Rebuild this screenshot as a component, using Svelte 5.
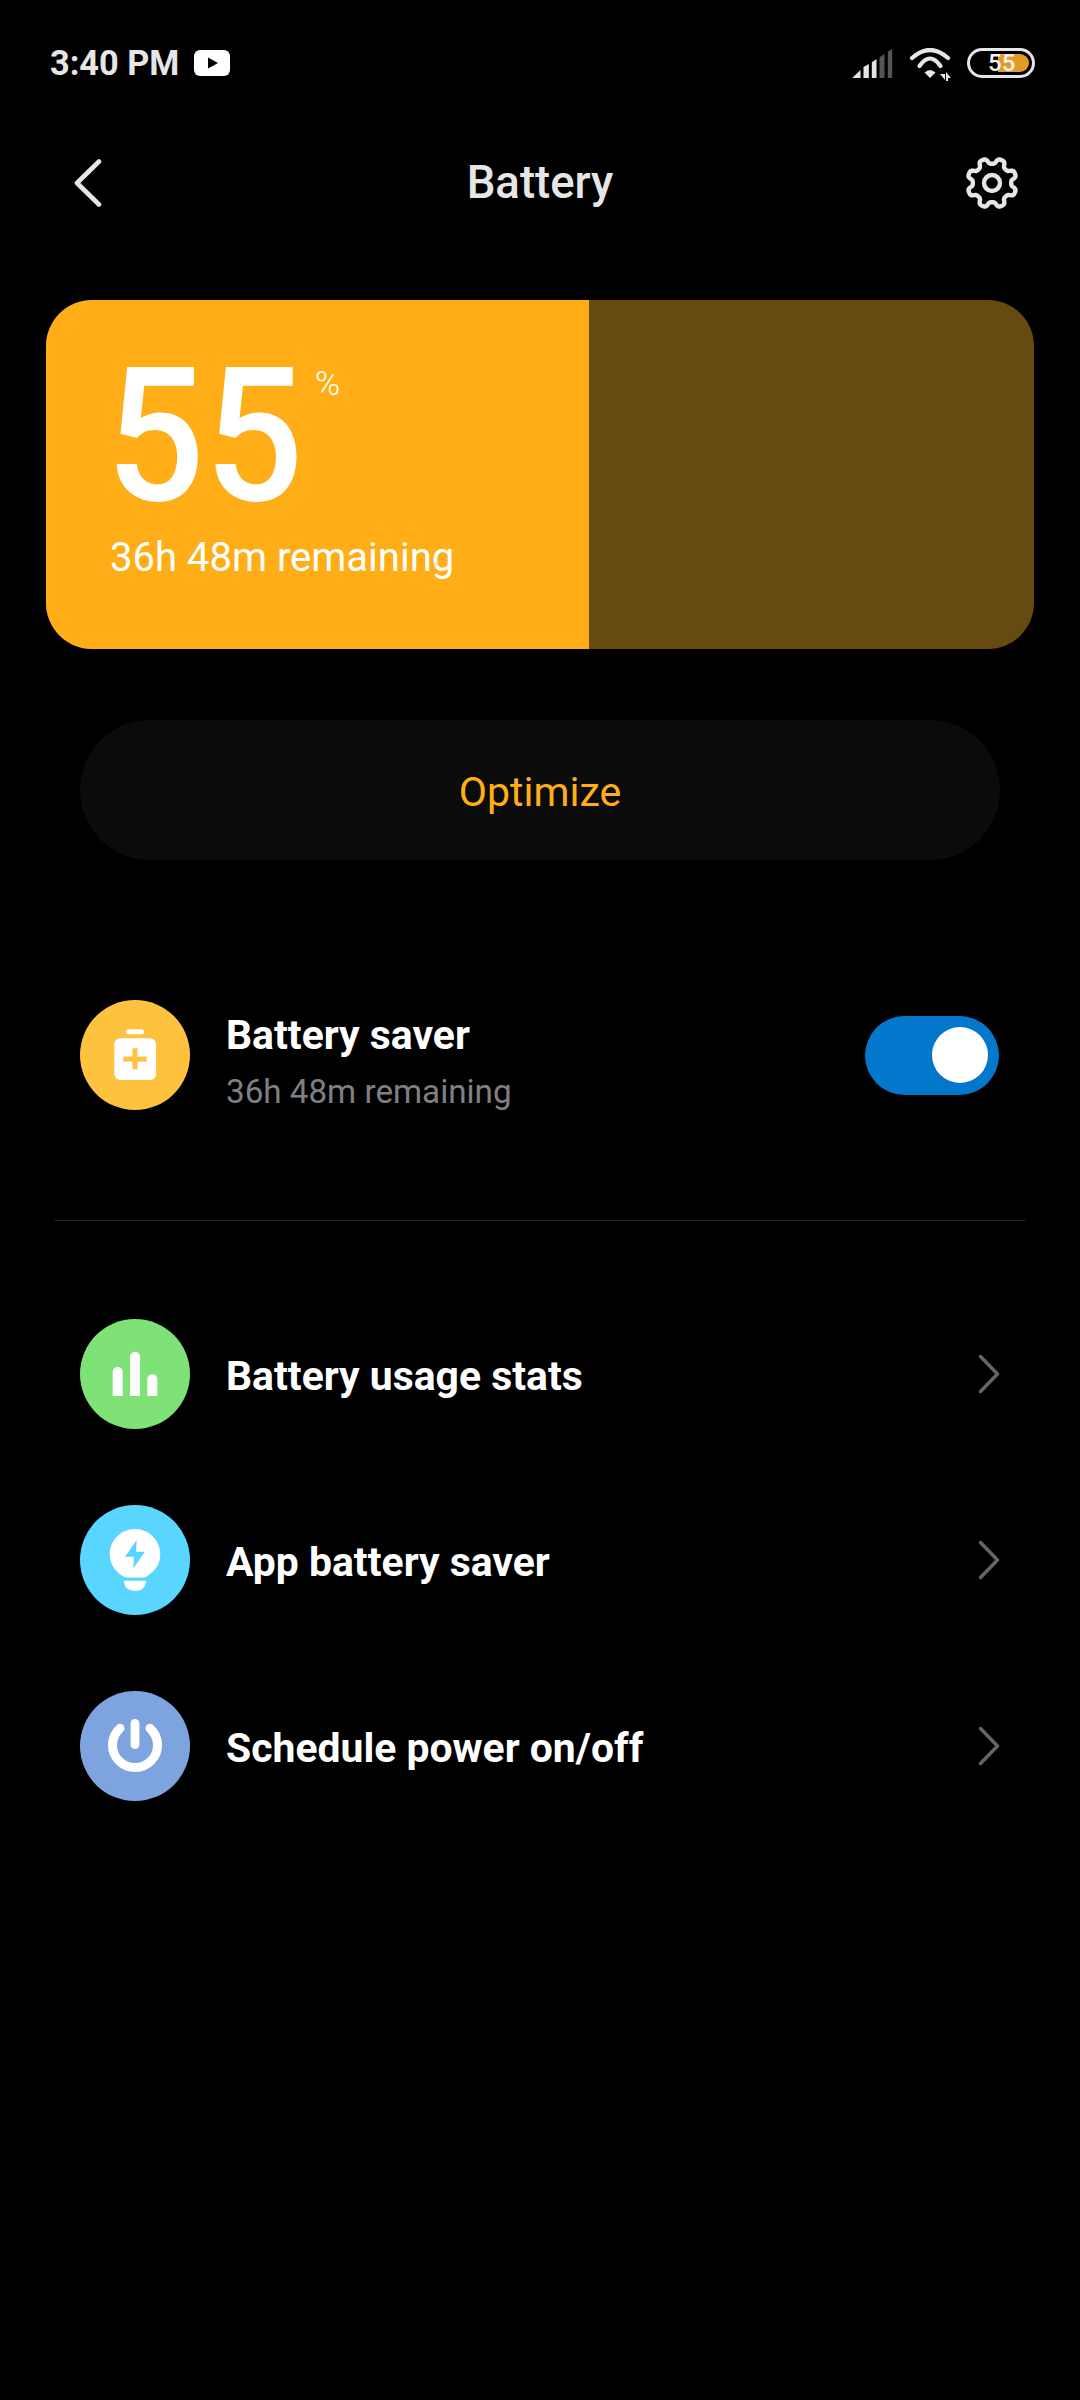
<script>
	const level = 55;
	const links = [
		{ label: 'Battery usage stats', color: '#7ee276', icon: 'stats' },
		{ label: 'App battery saver', color: '#59d5ff', icon: 'bulb' },
		{ label: 'Schedule power on/off', color: '#7ea4e0', icon: 'power' }
	];

	// eight soft lobes, two at the top like the MIUI gear
	function gearPath(cx, cy) {
		let d = '';
		for (let i = 0; i < 240; i++) {
			const a = (i / 240) * Math.PI * 2;
			const wave = Math.tanh(2 * Math.cos(8 * (a - Math.PI / 8))) / Math.tanh(2);
			const r = 22 + 2.8 * wave;
			d += `${i ? 'L' : 'M'}${(cx + r * Math.cos(a)).toFixed(2)} ${(cy + r * Math.sin(a)).toFixed(2)}`;
		}
		return d + 'Z';
	}
</script>

{#snippet icon(name, color)}
	<svg class="icon" viewBox="0 0 110 110" style:background={color}>
		{#if name === 'saver'}
			<rect x="46" y="29.3" width="18" height="5" rx="2.5" fill="#fff" />
			<rect x="34.3" y="38.3" width="41.7" height="41.7" rx="6" fill="#fff" />
			<rect x="43.3" y="56.6" width="23.4" height="5" fill={color} />
			<rect x="52.5" y="48.3" width="5" height="21" fill={color} />
		{:else if name === 'stats'}
			<path d="M32.7 77V53a5 5 0 0 1 10 0V77Z" fill="#fff" />
			<path d="M50 77V37.7a5 5 0 0 1 10 0V77Z" fill="#fff" />
			<path d="M67.3 77V60.3a5 5 0 0 1 10 0V77Z" fill="#fff" />
		{:else if name === 'bulb'}
			<path
				d="M55 24C41 24 29.7 35.3 29.7 49.3C29.7 59 35 66 42 70.5C43.5 71.5 44.5 72.5 47 72.5H63C65.5 72.5 66.5 71.5 68 70.5C75 66 80.3 59 80.3 49.3C80.3 35.3 69 24 55 24Z"
				fill="#fff"
			/>
			<path d="M44 75.7H66C66 81.5 62 85.7 57 85.7H53C48 85.7 44 81.5 44 75.7Z" fill="#fff" />
			<path d="M56.7 35L45 51.7H54L53.3 63.3L65 46.7H56Z" fill={color} />
		{:else}
			<path d="M40 37.3A22.5 22.5 0 1 0 70 37.3" fill="none" stroke="#fff" stroke-width="9" stroke-linecap="round" />
			<path d="M55 32.3V53.7" fill="none" stroke="#fff" stroke-width="8.8" stroke-linecap="round" />
		{/if}
	</svg>
{/snippet}

<div class="screen">
	<div class="status">
		<span class="time">3:40 PM</span>
		<svg class="yt" viewBox="0 0 36 26">
			<rect width="36" height="26" rx="6" fill="#fff" />
			<path d="M14 7.5L24 13L14 18.5Z" fill="#000" />
		</svg>
		<div class="status-right">
			<svg class="signal" viewBox="218 85 122 87">
				<path d="M218 172L243 148V172Z" fill="#e6e6e6" />
				<path d="M252 172V139L268 130V172Z" fill="#e6e6e6" />
				<path d="M277 172V125L291 115V172Z" fill="#e6e6e6" />
				<path d="M300 172V110L315 100V172Z" fill="#555" />
				<path d="M325 172V93L338 85V172Z" fill="#555" />
			</svg>
			<svg class="wifi" viewBox="0 0 42 33">
				<g fill="none" stroke="#e6e6e6" stroke-width="4.2" stroke-linecap="round">
					<path d="M3 10Q21 -6 39 10" />
					<path d="M10.5 18Q21 3 31.5 18" />
				</g>
				<path d="M15.5 24.5Q21 19.5 26.5 24.5L21 30Z" fill="#e6e6e6" />
				<path d="M31 26H36V32Z" fill="#e6e6e6" />
				<path d="M37 24L42 30H39V33H37Z" fill="#e6e6e6" />
			</svg>
			<div class="battery">
				<div class="battery-fill"></div>
				<span class="battery-num">55</span>
			</div>
		</div>
	</div>

	<header class="header">
		<svg class="back" viewBox="0 0 28 48">
			<path d="M25 2.5L3 24L25 45.5" fill="none" stroke="#e6e6e6" stroke-width="4.6" stroke-linecap="round" stroke-linejoin="round" />
		</svg>
		<h1>Battery</h1>
		<svg class="gear" viewBox="0 0 54 54">
			<path d={gearPath(27, 27)} fill="none" stroke="#e6e6e6" stroke-width="4.4" stroke-linejoin="round" />
			<circle cx="27" cy="27" r="8" fill="none" stroke="#e6e6e6" stroke-width="4.4" />
		</svg>
	</header>

	<section class="card">
		<div class="fill" style:width="{level}%">
			<div class="level">
				<span class="digits">{level}</span>
				<span class="pct">%</span>
			</div>
			<div class="remain">36h 48m remaining</div>
		</div>
	</section>

	<div class="optimize">Optimize</div>

	<div class="row saver">
		{@render icon('saver', '#ffc23e')}
		<div class="text saver-text">
			<div class="title">Battery saver</div>
			<div class="sub">36h 48m remaining</div>
		</div>
		<div class="toggle"><div class="knob"></div></div>
	</div>

	<div class="divider"></div>

	<div class="list">
		{#each links as link}
			<div class="row">
				{@render icon(link.icon, link.color)}
				<div class="text link-text">
					<div class="title">{link.label}</div>
				</div>
				<svg class="chev" viewBox="0 0 22 40">
					<path d="M2.5 2.5L19.5 20L2.5 37.5" fill="none" stroke="#666" stroke-width="3.4" stroke-linecap="round" stroke-linejoin="round" />
				</svg>
			</div>
		{/each}
	</div>
</div>

<style>
	:global(body) {
		background: #000;
		font-family: Roboto, sans-serif;
	}

	.screen {
		height: 2400px;
		background: #000;
		color: #fff;
		overflow: hidden;
	}

	.status {
		display: flex;
		align-items: center;
		height: 48px;
		padding: 39px 45px 0 50px;
	}

	.time {
		font-size: 34.3px;
		font-weight: 700;
		color: #e6e6e6;
		line-height: 48px;
	}

	.yt {
		width: 36px;
		height: 26px;
		margin-left: 15px;
	}

	.status-right {
		display: flex;
		align-items: center;
		gap: 16px;
		margin-left: auto;
	}

	.signal {
		width: 41px;
		height: 29px;
	}

	.wifi {
		width: 42px;
		height: 33px;
		margin-top: 3px;
	}

	.battery {
		position: relative;
		box-sizing: border-box;
		width: 68px;
		height: 30px;
		border: 3px solid #e6e6e6;
		border-radius: 15px;
	}

	.battery-fill {
		position: absolute;
		top: 3px;
		bottom: 3px;
		left: 28px;
		right: 3px;
		background: #e19b26;
		border-radius: 0 9px 9px 0;
	}

	.battery-num {
		position: absolute;
		left: 18px;
		top: 0;
		font-size: 24px;
		font-weight: 500;
		line-height: 24px;
		color: #f2f2f2;
	}

	.header {
		display: flex;
		align-items: center;
		justify-content: space-between;
		height: 70px;
		margin-top: 61px;
		padding: 0 61px 0 74px;
		position: relative;
	}

	.back {
		width: 28px;
		height: 48px;
	}

	h1 {
		position: absolute;
		left: 0;
		right: 0;
		margin: 0;
		text-align: center;
		font-size: 45.5px;
		font-weight: 500;
		line-height: 70px;
		color: #e6e6e6;
	}

	.gear {
		width: 54px;
		height: 54px;
	}

	.card {
		height: 349px;
		margin: 82px 46px 0;
		background: #664a0f;
		border-radius: 46px;
		overflow: hidden;
	}

	.fill {
		box-sizing: border-box;
		height: 100%;
		padding: 42px 0 0 64px;
		background: #ffae17;
	}

	.level {
		display: flex;
		align-items: flex-start;
		height: 192px;
	}

	.digits {
		display: block;
		width: 190px;
		margin-left: -4px;
		font-size: 187px;
		font-weight: 500;
		line-height: 190px;
		transform: scaleX(0.93);
		transform-origin: left;
	}

	.pct {
		margin: 21px 0 0 19px;
		font-size: 34px;
		font-weight: 300;
		line-height: 40px;
	}

	.remain {
		font-size: 40px;
		font-weight: 400;
		line-height: 48px;
	}

	.optimize {
		height: 140px;
		margin: 71px 80px 0;
		background: #0b0b0b;
		border-radius: 70px;
		color: #ffae17;
		font-size: 41px;
		line-height: 145px;
		text-align: center;
	}

	.row {
		display: flex;
		align-items: center;
		height: 110px;
		padding: 0 80px;
	}

	.saver {
		margin-top: 140px;
	}

	.icon {
		flex: none;
		width: 110px;
		height: 110px;
		border-radius: 50%;
	}

	.text {
		flex: 1;
		margin-left: 36px;
	}

	.saver-text {
		padding-top: 12px;
	}

	.link-text {
		padding-top: 3px;
	}

	.title {
		font-size: 40.9px;
		font-weight: 700;
		line-height: 48px;
	}

	.sub {
		margin-top: 13px;
		font-size: 33.2px;
		line-height: 40px;
		color: #808080;
	}

	.toggle {
		position: relative;
		width: 134px;
		height: 79px;
		margin-right: 1px;
		background: #0277cc;
		border-radius: 40px;
	}

	.knob {
		position: absolute;
		top: 11px;
		right: 11px;
		width: 56px;
		height: 56px;
		background: #fff;
		border-radius: 50%;
	}

	.divider {
		height: 1px;
		margin: 110px 54px 0;
		background: #222;
	}

	.list {
		display: flex;
		flex-direction: column;
		gap: 76px;
		margin-top: 98px;
	}

	.chev {
		width: 22px;
		height: 40px;
	}
</style>
